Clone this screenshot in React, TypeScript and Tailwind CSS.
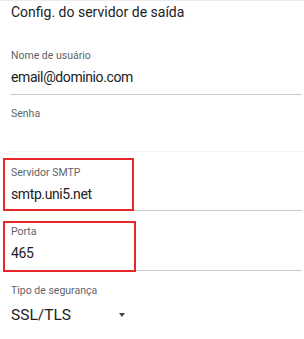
const font = { fontFamily: 'Roboto, "Noto Sans", sans-serif' };

interface FieldProps {
  label: string;
  value?: string;
  pt: string;
  pb: string;
  divider?: string;
}

function Field({ label, value, pt, pb, divider = 'border-[#c8c8c8]' }: FieldProps) {
  return (
    <div className={`border-b ${divider} ${pt} ${pb}`}>
      <div className="pl-px text-[10.5px] leading-[16px] text-[#5f6368]">{label}</div>
      <div className="mt-[3px] h-[20px] pl-px text-[14px] leading-[20px] tracking-[-0.4px] text-[#202124]">
        {value}
      </div>
    </div>
  );
}

export default function App() {
  return (
    <div className="relative h-[339px] w-[304px] overflow-hidden bg-white" style={font}>
      <div className="h-px bg-[#ececec]" />
      <div className="pl-[11px] pt-[1px] text-[14px] leading-[20px] text-[#202124]">
        Config. do servidor de saída
      </div>

      <div className="ml-[10px] mr-[2px] mt-[26px]">
        <Field label="Nome de usuário" value="email@dominio.com" pt="pt-0" pb="pb-[7px]" />
        <Field label="Senha" pt="pt-[11px]" pb="pb-[6px]" divider="border-[#f3f3f3]" />
        <Field label="Servidor SMTP" value="smtp.uni5.net" pt="pt-[13px]" pb="pb-[6px]" />
        <Field label="Porta" value="465" pt="pt-[13px]" pb="pb-[7px]" />

        <div className="pt-[12px]">
          <div className="pl-px text-[10.5px] leading-[16px] text-[#5f6368]">Tipo de segurança</div>
          <div className="mt-[6px] flex h-[20px] items-center pl-px text-[15.5px] leading-[20px] text-[#202124]">
            <span className="w-[50px]">SSL/TLS</span>
            <span className="ml-[58px] h-0 w-0 border-x-[3.5px] border-t-[4px] border-x-transparent border-t-[#444]" />
          </div>
        </div>
      </div>

      {/* annotation boxes */}
      <div className="absolute left-[3px] top-[158px] h-[53px] w-[131px] border-2 border-[#e8262b]" />
      <div className="absolute left-[3px] top-[221px] h-[51px] w-[133px] border-2 border-[#e8262b]" />
    </div>
  );
}
